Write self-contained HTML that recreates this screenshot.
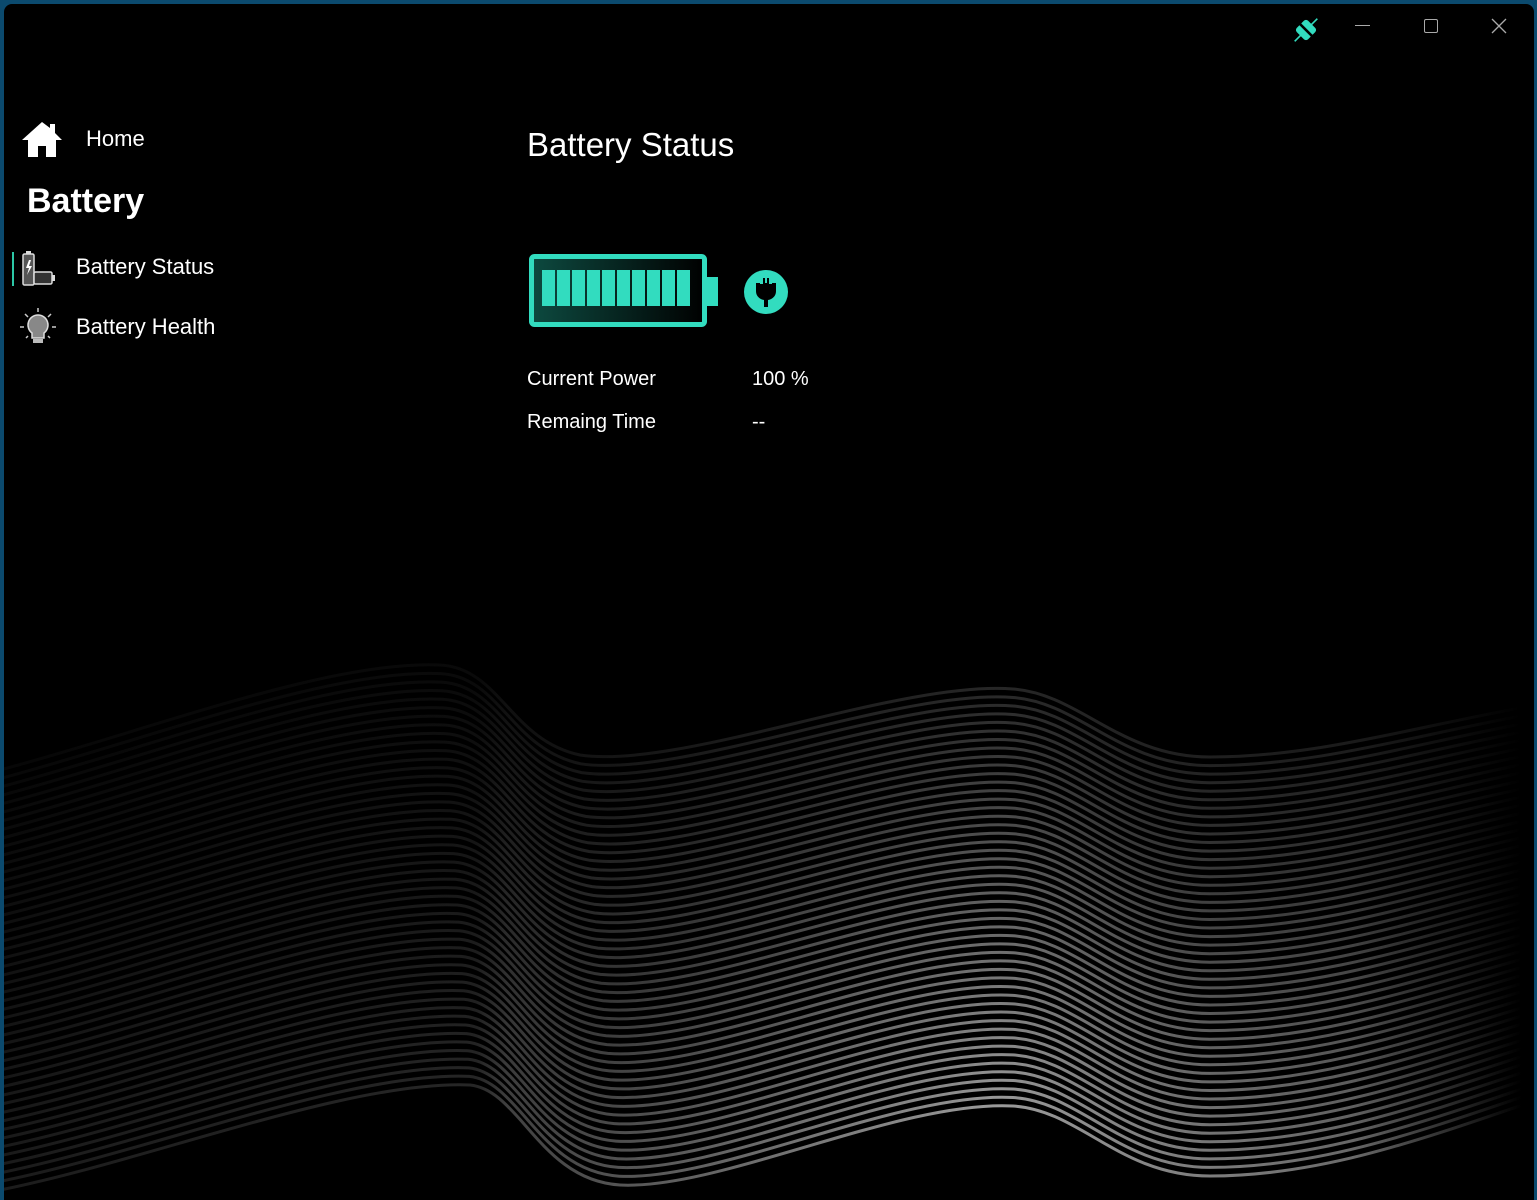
<!DOCTYPE html>
<html><head><meta charset="utf-8"><style>
html,body{margin:0;padding:0;width:1537px;height:1200px;overflow:hidden;background:#0b4a6e;font-family:"Segoe UI","Liberation Sans",sans-serif;}
#win{position:absolute;left:4px;top:4px;width:1530px;height:1196px;background:#000;border-radius:8px 8px 0 0;overflow:hidden;}
.t{position:absolute;color:#fff;white-space:nowrap;}
svg{position:absolute;}
</style></head><body>
<div id="win">
<svg id="waves" width="1537" height="1200" style="left:-4px;top:-4px"></svg>

<svg width="40" height="40" style="left:1284px;top:6px" viewBox="0 0 40 40">
 <g transform="rotate(45 18 20)"><rect x="10" y="12" width="16" height="16" rx="3" fill="#32dcbf"/><line x1="18" y1="4" x2="18" y2="36" stroke="#32dcbf" stroke-width="1.6"/><line x1="8" y1="20" x2="28" y2="20" stroke="#000" stroke-width="2.5"/></g>
</svg>
<div style="position:absolute;left:1351px;top:21px;width:15px;height:1px;background:#aaa"></div>
<div style="position:absolute;left:1420px;top:15px;width:12px;height:12px;border:1.3px solid #aaa;border-radius:2px"></div>
<svg width="16" height="16" style="left:1487px;top:14px"><path d="M1 1L15 15M15 1L1 15" stroke="#aaa" stroke-width="1.3"/></svg>

<svg width="44" height="40" style="left:16px;top:116px" viewBox="0 0 44 40"><path d="M22 2L2 20h6v17h10v-11h8v11h10V20h6L35 13V4h-5v4z" fill="#fff"/></svg>
<div class="t" style="left:82px;top:122px;font-size:22px">Home</div>
<div class="t" style="left:23px;top:178px;font-size:34px;font-weight:bold">Battery</div>
<div style="position:absolute;left:8px;top:248px;width:2px;height:34px;background:#2cc7a6"></div>
<svg width="40" height="40" style="left:16px;top:244px" viewBox="0 0 40 40">
 <rect x="3" y="6" width="11" height="31" rx="1.5" fill="#555" stroke="#ddd" stroke-width="1.5"/><rect x="6" y="3" width="5" height="3" fill="#ddd"/>
 <path d="M9 12l-3 8h3l-2 7 5-9h-3l2-6z" fill="#fff"/>
 <rect x="14" y="24" width="18" height="12" rx="1.5" fill="#333" stroke="#ddd" stroke-width="1.5"/><rect x="32" y="27" width="3" height="6" fill="#ddd"/>
</svg>
<div class="t" style="left:72px;top:250px;font-size:22px">Battery Status</div>
<svg width="40" height="40" style="left:14px;top:303px" viewBox="0 0 40 40">
 <g stroke="#ccc" stroke-width="1.5"><line x1="20" y1="1" x2="20" y2="5"/><line x1="7" y1="7" x2="10" y2="10"/><line x1="33" y1="7" x2="30" y2="10"/><line x1="2" y1="20" x2="6" y2="20"/><line x1="34" y1="20" x2="38" y2="20"/><line x1="8" y1="31" x2="10" y2="29"/><line x1="32" y1="31" x2="30" y2="29"/></g>
 <path d="M20 8a10 10 0 0 0-6 18v5h12v-5a10 10 0 0 0-6-18z" fill="#888" stroke="#ddd" stroke-width="1.5"/><rect x="15" y="32" width="10" height="4" fill="#bbb"/>
</svg>
<div class="t" style="left:72px;top:310px;font-size:22px">Battery Health</div>

<div class="t" style="left:523px;top:122px;font-size:33px">Battery Status</div>
<svg width="200" height="80" style="left:522px;top:248px" viewBox="0 0 200 80">
 <defs><linearGradient id="bg" x1="0" x2="1"><stop offset="0" stop-color="#0d4a40"/><stop offset="1" stop-color="#000"/></linearGradient></defs>
 <rect x="5.5" y="4.5" width="173" height="68" rx="3" fill="url(#bg)" stroke="#32dcbf" stroke-width="5"/>
 <rect x="178" y="25" width="14" height="29" fill="#32dcbf"/>
 <g fill="#32dcbf">
  <rect x="16" y="18" width="13" height="36"/><rect x="31" y="18" width="13" height="36"/><rect x="46" y="18" width="13" height="36"/><rect x="61" y="18" width="13" height="36"/><rect x="76" y="18" width="13" height="36"/><rect x="91" y="18" width="13" height="36"/><rect x="106" y="18" width="13" height="36"/><rect x="121" y="18" width="13" height="36"/><rect x="136" y="18" width="13" height="36"/><rect x="151" y="18" width="13" height="36"/>
 </g>
</svg>
<svg width="50" height="50" style="left:737px;top:263px" viewBox="0 0 50 50">
 <circle cx="25" cy="25" r="22" fill="#32dcbf"/>
 <path d="M15 16h6v-5h3v5h2v-5h3v5h6v8a9 9 0 0 1-8 9v7h-4v-7a9 9 0 0 1-8-9z" fill="#000"/>
 <rect x="19" y="11" width="3" height="6" fill="#32dcbf"/><rect x="28" y="11" width="3" height="6" fill="#32dcbf"/>
</svg>
<div class="t" style="left:523px;top:364px;font-size:20px">Current Power</div>
<div class="t" style="left:748px;top:364px;font-size:20px">100 %</div>
<div class="t" style="left:523px;top:407px;font-size:20px">Remaing Time</div>
<div class="t" style="left:748px;top:407px;font-size:20px">--</div>
</div>
<script>
var T=[0,770, 150,730,330,660,440,665, 500,668,510,740,580,755, 680,770,900,680,1013,689, 1080,694,1120,757,1210,757, 1320,757,1420,725,1537,705];
var B=[0,1190, 150,1160,350,1080,470,1085, 520,1090,540,1180,620,1185, 720,1190,900,1100,1013,1106, 1080,1110,1120,1176,1210,1176, 1320,1176,1420,1140,1537,1100];
var N=50,s='<defs><linearGradient id="wg" gradientUnits="userSpaceOnUse" x1="0" y1="0" x2="1537" y2="0"><stop offset="0" stop-color="#1c1c1c"/><stop offset="0.31" stop-color="#262626"/><stop offset="0.33" stop-color="#404040"/><stop offset="0.65" stop-color="#9a9a9a"/><stop offset="0.88" stop-color="#6a6a6a"/><stop offset="0.99" stop-color="#000"/></linearGradient></defs>';
for(var i=0;i<N;i++){var f=i/(N-1),p=T.map(function(v,k){return (v+(B[k]-v)*f).toFixed(1);});
var d='M'+p[0]+' '+p[1];for(var k=2;k<p.length;k+=6)d+=' C'+p.slice(k,k+6).join(' ');
s+='<path d="'+d+'" fill="none" stroke="url(#wg)" stroke-width="3" opacity="'+(0.25+0.75*f).toFixed(2)+'"/>';}
document.getElementById('waves').innerHTML=s;
</script>
</body></html>
